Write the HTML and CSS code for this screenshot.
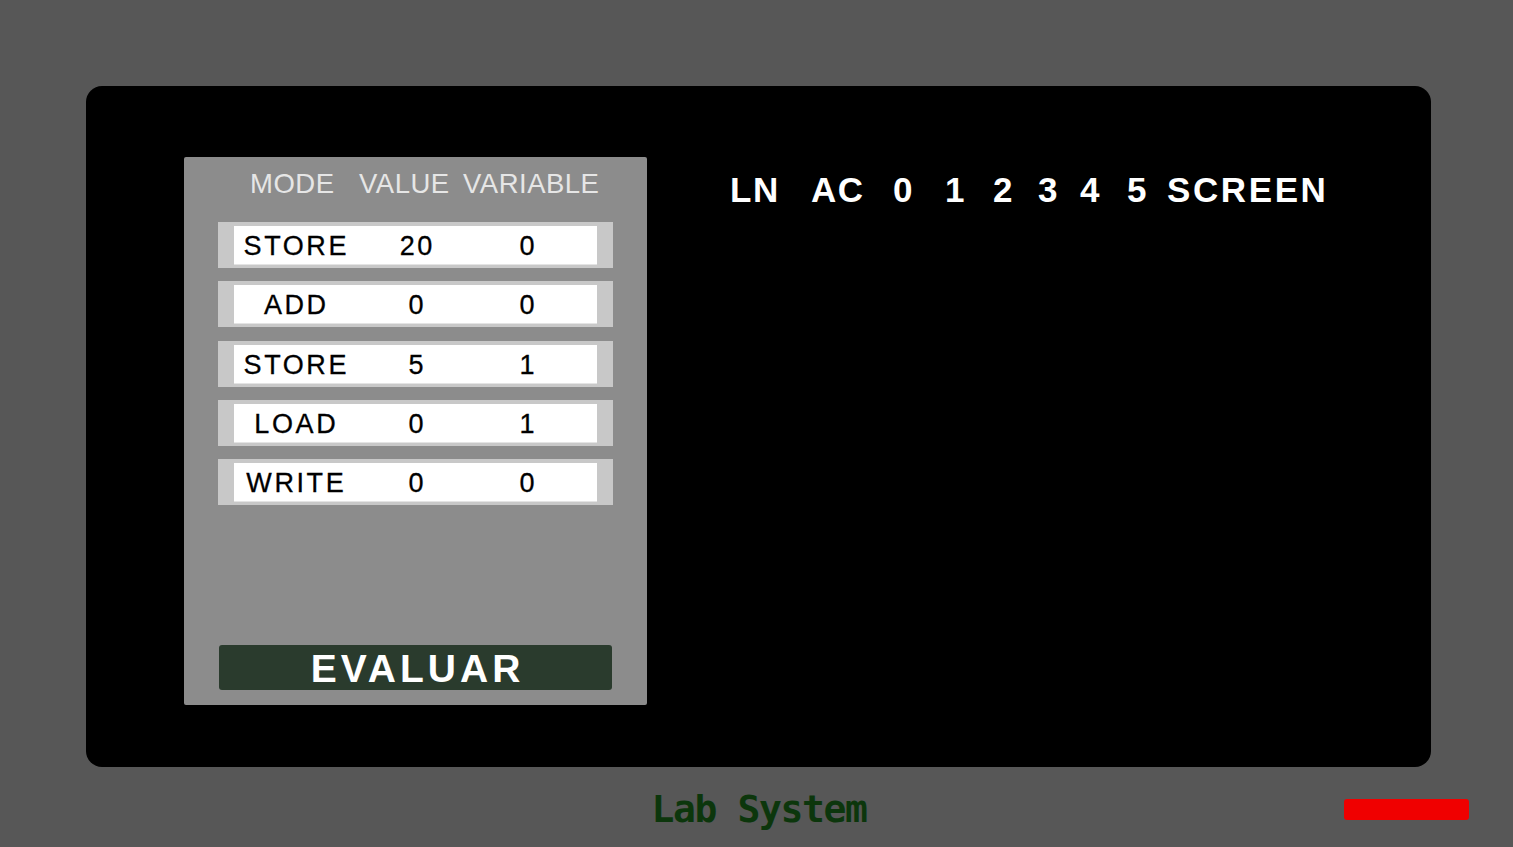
FILE: index.html
```html
<!DOCTYPE html>
<html lang="es">
<head>
<meta charset="utf-8">
<title>Lab System</title>
<link rel="stylesheet" href="styles.css">
</head>
<body>
  <div class="stage">
    <main class="console">
      <section class="program">
        <div class="program-head">
          <span>MODE</span><span>VALUE</span><span>VARIABLE</span>
        </div>
        <div class="rows">
          <div class="row"><div class="cells"><span>STORE</span><span>20</span><span>0</span></div></div>
          <div class="row"><div class="cells"><span>ADD</span><span>0</span><span>0</span></div></div>
          <div class="row"><div class="cells"><span>STORE</span><span>5</span><span>1</span></div></div>
          <div class="row"><div class="cells"><span>LOAD</span><span>0</span><span>1</span></div></div>
          <div class="row"><div class="cells"><span>WRITE</span><span>0</span><span>0</span></div></div>
        </div>
        <button class="evaluate" type="button">EVALUAR</button>
      </section>
      <section class="trace">
        <div class="trace-head">
          <span>LN</span><span>AC</span><span>0</span><span>1</span><span>2</span><span>3</span><span>4</span><span>5</span><span class="screen">SCREEN</span>
        </div>
      </section>
    </main>
  </div>
  <footer class="footer">
    <span class="spacer"></span>
    <span class="brand">Lab System</span>
    <span class="bar-wrap"><span class="red-bar"></span></span>
  </footer>
</body>
</html>
```

FILE: styles.css
```css
html, body {
  margin: 0;
  padding: 0;
}

body {
  background: #575757;
  width: 1513px;
  height: 847px;
  overflow: hidden;
  font-family: "Liberation Sans", Arial, sans-serif;
}

.stage {
  padding: 86px 82px 0 86px;
}

.console {
  background: #000;
  border-radius: 16px;
  height: 681px;
  box-sizing: border-box;
  padding: 71px 0 0 98px;
  display: flex;
  align-items: flex-start;
}

.program {
  width: 463px;
  height: 548px;
  background: #8c8c8c;
  border-radius: 2px;
  box-sizing: border-box;
  padding: 0 34px 15px 34px;
  display: flex;
  flex-direction: column;
}

.program-head {
  height: 65px;
  box-sizing: border-box;
  padding: 13px 0 0 32px;
  display: grid;
  grid-template-columns: 109px 104px auto;
  align-items: start;
  color: #e6e6e6;
  font-size: 27.5px;
  line-height: 28px;
  letter-spacing: 0.5px;
}

.rows {
  display: flex;
  flex-direction: column;
  gap: 13.25px;
}

.row {
  background: #c8c8c8;
  padding: 4px 16px 3px 16px;
}

.cells {
  background: #fff;
  height: 38px;
  border-bottom: 1px solid #e4e4e4;
  display: grid;
  grid-template-columns: 122px 120px 102px;
  align-items: center;
  color: #000;
  font-size: 27px;
  line-height: 40px;
  letter-spacing: 2.6px;
}

.cells span {
  text-align: center;
  padding-left: 2.6px;
  -webkit-text-stroke: 0.3px #000;
}

.evaluate {
  margin: auto 1px 0 1px;
  height: 45px;
  border: none;
  border-radius: 3px;
  background: #2a3b2d;
  color: #fff;
  font-family: "Liberation Sans", Arial, sans-serif;
  font-weight: bold;
  font-size: 39px;
  line-height: 43px;
  letter-spacing: 4px;
  padding: 2px 0 0 4px;
  text-align: center;
}

.trace {
  margin-left: 83px;
  margin-top: 15px;
}

.trace-head {
  display: grid;
  grid-template-columns: 81px 82px 52px 48px 45px 42px 47px 40px auto;
  color: #fff;
  font-weight: bold;
  font-size: 35px;
  line-height: 35px;
  letter-spacing: 1.5px;
  white-space: nowrap;
}

.screen {
  letter-spacing: 2.6px;
}

.footer {
  margin-top: 20px;
  display: grid;
  grid-template-columns: 1fr auto 1fr;
  align-items: center;
  height: 44px;
}

.brand {
  font-family: "DejaVu Sans Mono", "Liberation Mono", monospace;
  font-weight: bold;
  font-size: 38px;
  line-height: 44px;
  letter-spacing: -1.4px;
  color: #0c360c;
  padding-left: 5px;
}

.bar-wrap {
  display: flex;
  justify-content: flex-end;
  padding-right: 44px;
}

.red-bar {
  width: 125px;
  height: 21px;
  border-radius: 3px;
  background: #f00000;
}
```
